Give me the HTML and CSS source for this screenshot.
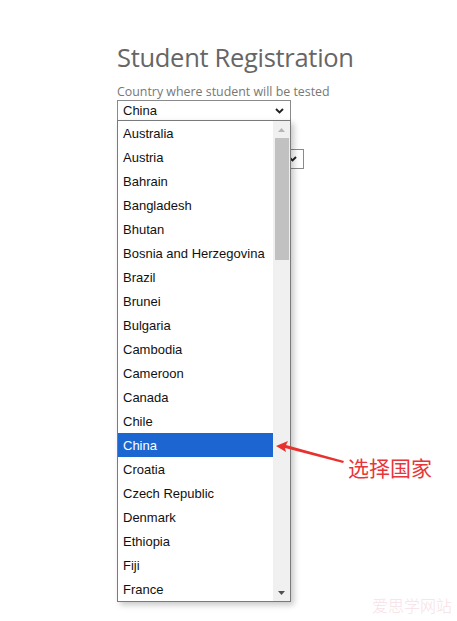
FILE: index.html
```html
<!DOCTYPE html>
<html lang="en">
<head>
    <meta charset="UTF-8">
    <meta name="viewport" content="width=device-width, initial-scale=1.0">
    <title>Student Registration</title>
    <link rel="stylesheet" href="styles.css">
</head>
<body>
    <div class="page">
        <h1 class="title">Student Registration</h1>

        <!-- Country field -->
        <label class="field-label">Country where student will be tested</label>
        <div class="select select-country">
            <span>China</span>
            <svg class="chevron" width="9" height="6" viewBox="0 0 9 6"><path d="M1 1 L4.5 4.5 L8 1" fill="none" stroke="#222" stroke-width="1.9"/></svg>
        </div>

        <!-- Next field, mostly hidden under the open list -->
        <div class="select select-second">
            <svg class="chevron" width="9" height="6" viewBox="0 0 9 6"><path d="M1 1 L4.5 4.5 L8 1" fill="none" stroke="#222" stroke-width="1.9"/></svg>
        </div>

        <!-- Open dropdown list -->
        <div class="dropdown">
            <ul class="options">
                <li>Australia</li>
                <li>Austria</li>
                <li>Bahrain</li>
                <li>Bangladesh</li>
                <li>Bhutan</li>
                <li>Bosnia and Herzegovina</li>
                <li>Brazil</li>
                <li>Brunei</li>
                <li>Bulgaria</li>
                <li>Cambodia</li>
                <li>Cameroon</li>
                <li>Canada</li>
                <li>Chile</li>
                <li class="selected">China</li>
                <li>Croatia</li>
                <li>Czech Republic</li>
                <li>Denmark</li>
                <li>Ethiopia</li>
                <li>Fiji</li>
                <li>France</li>
            </ul>
            <div class="scrollbar">
                <div class="scroll-btn">
                    <svg width="7" height="4" viewBox="0 0 7 4"><path d="M0 4 L3.5 0 L7 4 Z" fill="#b5b5b5"/></svg>
                </div>
                <div class="scroll-track">
                    <div class="scroll-thumb"></div>
                </div>
                <div class="scroll-btn">
                    <svg width="7" height="4" viewBox="0 0 7 4"><path d="M0 0 L3.5 4 L7 0 Z" fill="#505050"/></svg>
                </div>
            </div>
        </div>

        <!-- Annotation -->
        <svg class="pointer" width="80" height="30" viewBox="0 0 80 30">
            <path d="M0 6 L12 1 L10 5 L68 21 L67 23 L9 8 L10 12 Z" fill="#e8312f"/>
        </svg>
        <div class="note">选择国家</div>
    </div>

    <div class="watermark">爱思学网站</div>
</body>
</html>
```

FILE: styles.css
```css
* {
    margin: 0;
    padding: 0;
    box-sizing: border-box;
}

body, html {
    height: 100%;
    overflow: hidden;
    background-color: white;
}

.page {
    position: relative;
    padding: 40px 0 0 117px;
    font-family: "Open Sans", "Noto Sans", sans-serif;
}

.title {
    font-size: 25.5px;
    font-weight: normal;
    color: #666;
    line-height: 34px;
    letter-spacing: -0.3px;
}

.field-label {
    display: block;
    margin-top: 10px;
    font-size: 12.4px;
    line-height: 16px;
    color: #777;
}

.select {
    display: flex;
    align-items: center;
    justify-content: space-between;
    height: 21px;
    border: 1px solid #8a8a8a;
    padding: 0 6px 0 5px;
    font-family: "Liberation Sans", Arial, sans-serif;
    font-size: 13px;
    color: #111;
    background: white;
}

.select-country {
    width: 174px;
}

.select-second {
    width: 187px;
    height: 20px;
    margin-top: 28px;
    justify-content: flex-end;
}

.dropdown {
    position: absolute;
    top: 120px;
    left: 117px;
    width: 174px;
    height: 482px;
    display: flex;
    border: 1px solid #7a7a7a;
    background: white;
    box-shadow: 3px 3px 6px rgba(0, 0, 0, 0.22);
}

.options {
    flex: 1;
    list-style: none;
    font-family: "Liberation Sans", Arial, sans-serif;
    font-size: 13px;
    color: #111;
}

.options li {
    height: 24px;
    line-height: 23px;
    padding: 1px 0 0 5px;
}

.options li.selected {
    background-color: #1c66d1;
    color: white;
}

.scrollbar {
    width: 17px;
    display: flex;
    flex-direction: column;
    background-color: #f0f0f0;
}

.scroll-btn {
    height: 17px;
    display: flex;
    align-items: center;
    justify-content: center;
}

.scroll-track {
    flex: 1;
    padding: 0 1px 0 2px;
}

.scroll-thumb {
    height: 122px;
    background-color: #c1c1c1;
}

.pointer {
    position: absolute;
    top: 440px;
    left: 276px;
}

.note {
    position: absolute;
    top: 453px;
    left: 348px;
    font-family: "Noto Sans CJK SC", sans-serif;
    font-size: 21px;
    line-height: 28px;
    color: #e8353a;
}

.watermark {
    position: absolute;
    right: 5px;
    bottom: 4px;
    font-family: "Noto Sans CJK SC", sans-serif;
    font-size: 16px;
    font-weight: 300;
    color: #f7e1e6;
}
```
